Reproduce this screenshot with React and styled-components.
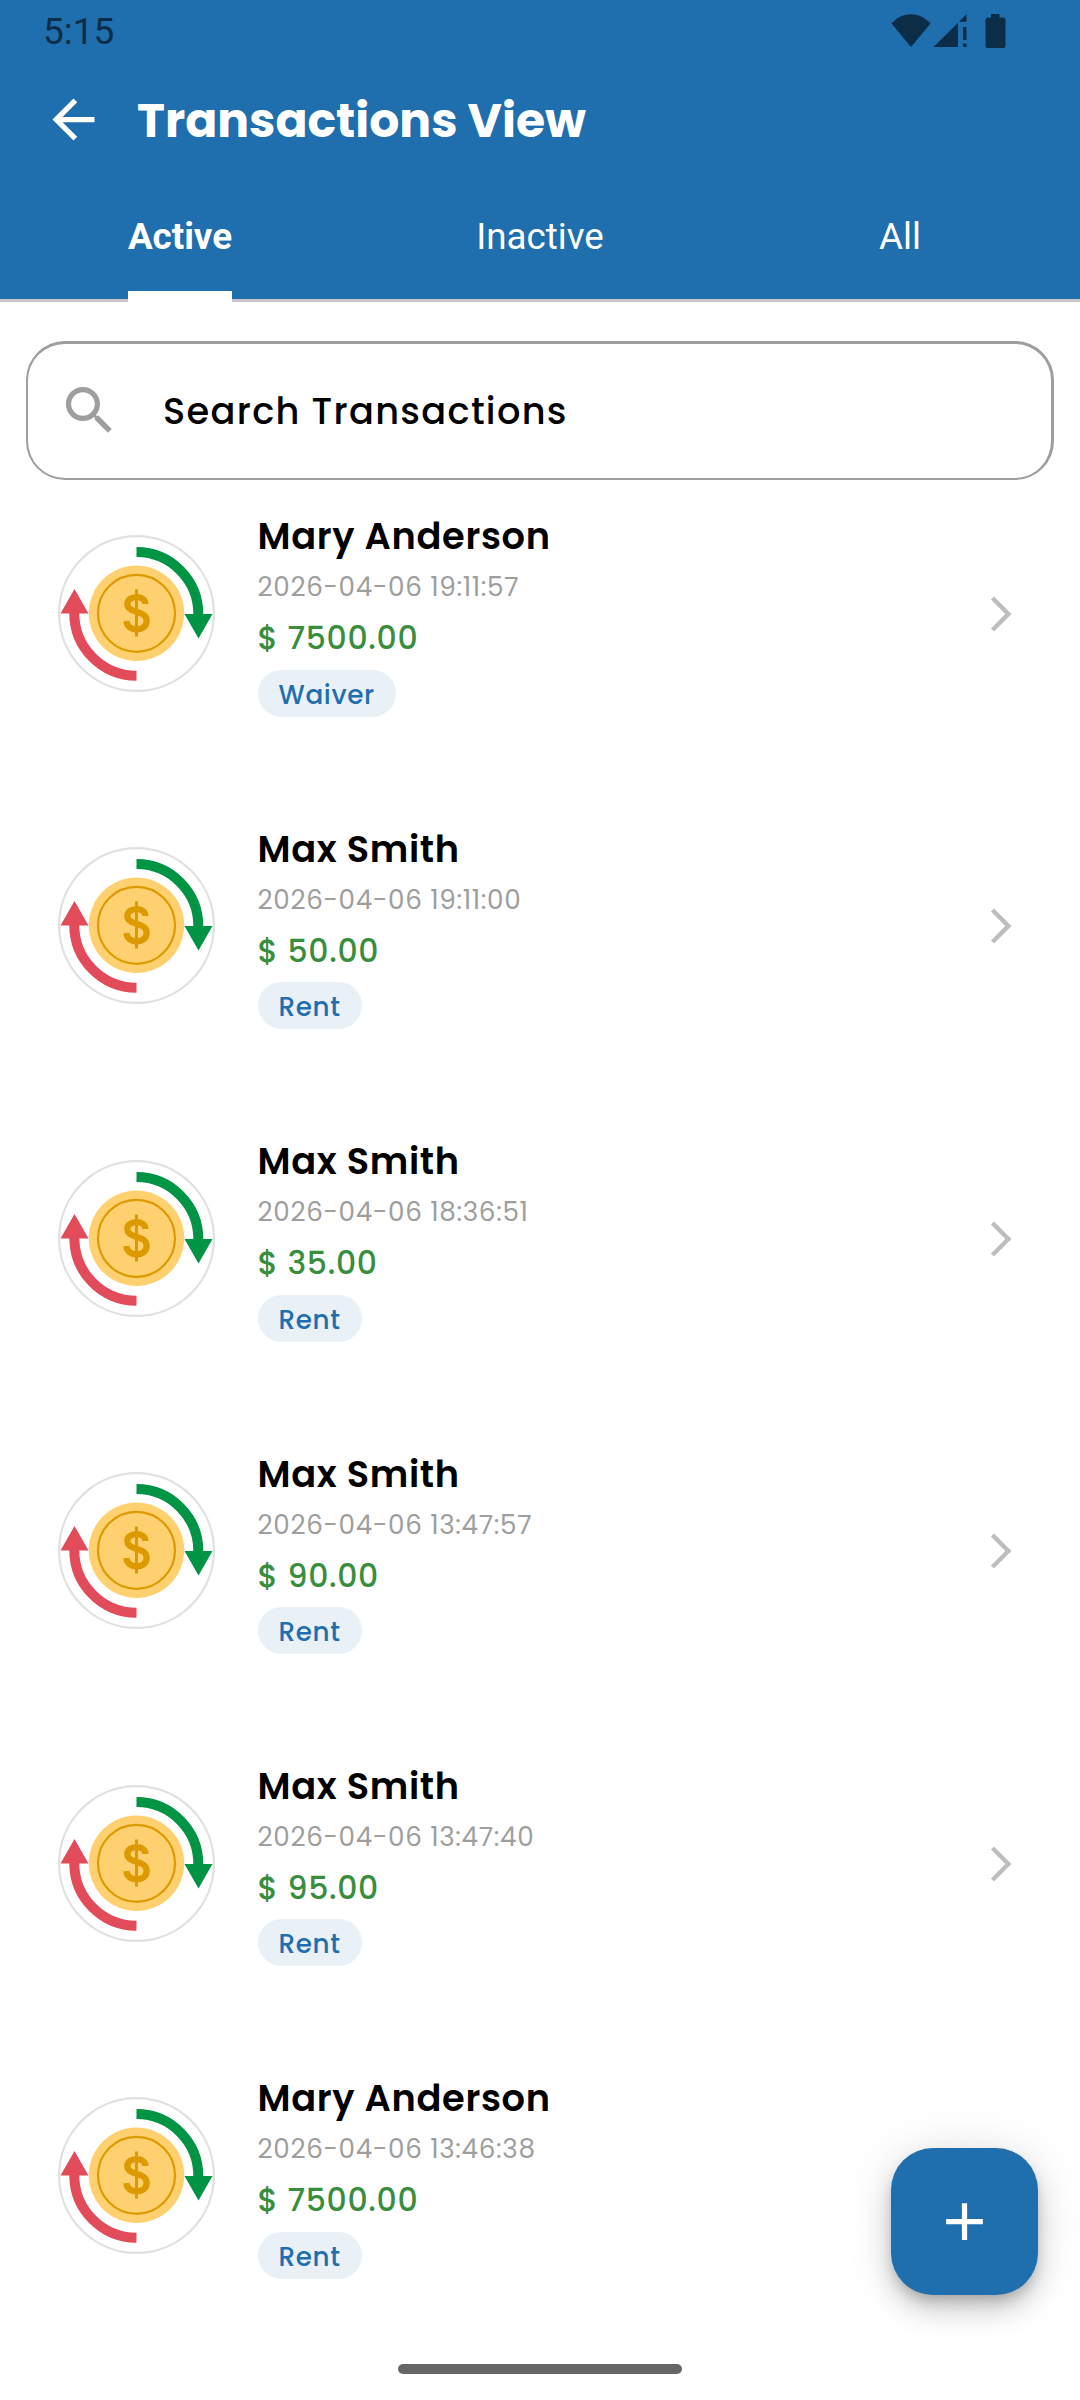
import React from "react";
import styled, { createGlobalStyle } from "styled-components";

const tabs = [
    { label: "Active", active: true },
    { label: "Inactive" },
    { label: "All" },
];

const transactions = [
    { name: "Mary Anderson", date: "2026-04-06 19:11:57", amount: "7500.00", type: "Waiver" },
    { name: "Max Smith", date: "2026-04-06 19:11:00", amount: "50.00", type: "Rent" },
    { name: "Max Smith", date: "2026-04-06 18:36:51", amount: "35.00", type: "Rent" },
    { name: "Max Smith", date: "2026-04-06 13:47:57", amount: "90.00", type: "Rent" },
    { name: "Max Smith", date: "2026-04-06 13:47:40", amount: "95.00", type: "Rent" },
    { name: "Mary Anderson", date: "2026-04-06 13:46:38", amount: "7500.00", type: "Rent" },
];

function StatusIcons() {
    return (
        <svg width="116" height="36" viewBox="0 0 116 36" fill="#0c2d48">
            <path d="M0.5 9.500C11.5-2.700 28-2.700 39.5 9.500L20 33Z" />
            <path d="M42.5 33L67 8.800V33Z" />
            <path d="M68 7.800L75.500 0.300V7.800Z" />
            <rect x="72" y="13" width="3.5" height="13" />
            <rect x="72" y="29.5" width="3.5" height="3.5" />
            <path d="M100 0h8.500v3.500h3.500q2.500 0 2.500 2.500v25.500q0 2.500-2.500 2.500h-15q-2.500 0-2.500-2.500v-25.500q0-2.500 2.500-2.500h3z" />
        </svg>
    );
}

function BackIcon() {
    return (
        <svg width="63" height="63" viewBox="0 0 24 24" fill="#fff">
            <path d="M20 11H7.83l5.59-5.59L12 4l-8 8 8 8 1.41-1.41L7.83 13H20v-2z" />
        </svg>
    );
}

function SearchIcon() {
    return (
        <svg width="63" height="63" viewBox="0 0 24 24" fill="#9e9e9e">
            <path d="M15.5 14h-.79l-.28-.27C15.41 12.59 16 11.11 16 9.5 16 5.91 13.09 3 9.5 3S3 5.91 3 9.5 5.91 16 9.5 16c1.61 0 3.09-.59 4.23-1.57l.27.28v.79l5 4.99L20.49 19l-4.99-5zm-6 0C7.01 14 5 11.99 5 9.5S7.01 5 9.5 5 14 7.01 14 9.5 11.99 14 9.5 14z" />
        </svg>
    );
}

function CoinIcon() {
    return (
        <svg width="157" height="157" viewBox="0 0 157 157">
            <circle cx="78.500" cy="78.500" r="77.400" fill="#fff" stroke="#e0e0e0" strokeWidth="2.200" />
            <circle cx="78.500" cy="78.300" r="47.700" fill="#ffd070" />
            <circle cx="78.500" cy="78.300" r="38.500" fill="none" stroke="#dd9a00" strokeWidth="2.200" />
            <path d="M78.500 17A62 62 0 0 1 140.300 79.500" fill="none" stroke="#019444" strokeWidth="10" />
            <path d="M126.500 79H154.500L140.500 103.500Z" fill="#019444" />
            <path d="M78.500 140.800A62.500 62.500 0 0 1 16.300 78" fill="none" stroke="#e14b5a" strokeWidth="10" />
            <path d="M2.500 78.500H30.500L16.500 54Z" fill="#e14b5a" />
            <path
                d="M87.3 69C87.300 64.500 84 62.200 78.700 62.200C73 62.200 69.300 65 69.300 69.200C69.300 73.500 73 75.300 79 77C85 78.700 88.600 80.500 88.600 86C88.600 91 84.500 94.300 78.800 94.300C72.500 94.300 68.800 91 68.500 86"
                fill="none"
                stroke="#dd9a00"
                strokeWidth="6.300"
            />
            <path d="M78.500 54.500V101.500" stroke="#dd9a00" strokeWidth="3" />
        </svg>
    );
}

function ChevronIcon() {
    return (
        <svg width="42" height="42" viewBox="0 0 24 24" fill="#bdbdbd">
            <path d="M6.23 20.23L8 22l10-10L8 2 6.23 3.77 14.46 12z" />
        </svg>
    );
}

function PlusIcon() {
    return (
        <svg width="63" height="63" viewBox="0 0 24 24" fill="#fff">
            <path d="M19 13h-6v6h-2v-6H5v-2h6V5h2v6h6v2z" />
        </svg>
    );
}

function App() {
    return (
        <>
            <GlobalStyle />
            <Screen>
                <Header>
                    <StatusBar>
                        <Clock>5:15</Clock>
                        <StatusIcons />
                    </StatusBar>
                    <TitleBar>
                        <BackIcon />
                        <Title>Transactions View</Title>
                    </TitleBar>
                    <Tabs>
                        {tabs.map((tab) => (
                            <TabItem key={tab.label}>
                                <Tab $active={tab.active}>{tab.label}</Tab>
                            </TabItem>
                        ))}
                    </Tabs>
                </Header>
                <SearchBox>
                    <SearchIcon />
                    <SearchText>Search Transactions</SearchText>
                </SearchBox>
                <List>
                    {transactions.map((item) => (
                        <Row key={item.date}>
                            <Avatar>
                                <CoinIcon />
                            </Avatar>
                            <Details>
                                <Name>{item.name}</Name>
                                <DateText>{item.date}</DateText>
                                <Amount>$ {item.amount}</Amount>
                                <Badge>{item.type}</Badge>
                            </Details>
                            <Arrow>
                                <ChevronIcon />
                            </Arrow>
                        </Row>
                    ))}
                </List>
                <AddButton aria-label="Add transaction">
                    <PlusIcon />
                </AddButton>
                <HomeBar />
            </Screen>
        </>
    );
}

export default App;

const GlobalStyle = createGlobalStyle`
    * {
        box-sizing: border-box;
    }
    body {
        margin: 0;
        background-color: #fff;
        font-family: Poppins, Inter, sans-serif;
    }
    svg {
        display: block;
        flex-shrink: 0;
    }
`;
const Screen = styled.div`
    position: relative;
    width: 1080px;
    height: 2400px;
    overflow: hidden;
    background-color: #fff;
`;
const Header = styled.header`
    height: 302px;
    background-color: #1f6eae;
    border-bottom: 3px solid #cac4d0;
`;
const StatusBar = styled.div`
    display: flex;
    justify-content: space-between;
    height: 63px;
    padding: 14px 73px 0 43px;
`;
const Clock = styled.span`
    font-family: Roboto, sans-serif;
    font-size: 37px;
    line-height: 36px;
    color: #0c2d48;
`;
const TitleBar = styled.div`
    display: flex;
    align-items: center;
    gap: 32px;
    height: 113px;
    padding: 0 42px;
`;
const Title = styled.h1`
    margin: 2px 0 0;
    font-size: 47.25px;
    font-weight: 700;
    line-height: 62px;
    white-space: nowrap;
    color: #fff;
`;
const Tabs = styled.nav`
    display: grid;
    grid-template-columns: repeat(3, 1fr);
    height: 126px;
`;
const TabItem = styled.div`
    display: flex;
    justify-content: center;
`;
const Tab = styled.div`
    height: 126px;
    padding-top: 39px;
    border-bottom: 11px solid ${(props) => (props.$active ? "#fff" : "transparent")};
    font-family: Roboto, sans-serif;
    font-size: 36.75px;
    font-weight: ${(props) => (props.$active ? 700 : 400)};
    line-height: 44px;
    color: #fff;
`;
const SearchBox = styled.div`
    display: flex;
    align-items: center;
    gap: 42px;
    height: 139px;
    margin: 39px 26px 0;
    padding-left: 30px;
    border: 2px solid #9e9e9e;
    border-top-width: 3px;
    border-right-width: 3px;
    border-radius: 39px;

    svg {
        margin-bottom: 1px;
    }
`;
const SearchText = styled.span`
    font-size: 36.75px;
    font-weight: 500;
    line-height: 54px;
    letter-spacing: 1.31px;
    color: #000;
`;
const List = styled.div`
    padding-top: 28px;
`;
const Row = styled.div`
    display: flex;
    height: 312.375px;
    padding: 0 58px;
`;
const Avatar = styled.div`
    margin-top: 27px;
`;
const Details = styled.div`
    display: flex;
    flex-direction: column;
    align-items: flex-start;
    flex: 1;
    margin-left: 42.5px;
    padding-top: 0.4px;
    white-space: nowrap;
`;
const Name = styled.div`
    font-size: 36.75px;
    font-weight: 600;
    line-height: 56px;
    letter-spacing: 0.66px;
    color: #000;
`;
const DateText = styled.div`
    font-size: 26.25px;
    font-weight: 400;
    line-height: 46px;
    letter-spacing: 0.66px;
    color: #9e9e9e;
`;
const Amount = styled.div`
    font-size: 31.5px;
    font-weight: 500;
    line-height: 56px;
    letter-spacing: 0.66px;
    color: #388e3c;
`;
const Badge = styled.div`
    height: 47px;
    margin-top: 3.6px;
    padding: 0 21px;
    border-radius: 24px;
    background-color: #e9f0f6;
    font-size: 26.25px;
    font-weight: 500;
    line-height: 50px;
    letter-spacing: 0.66px;
    color: #1f6eae;
`;
const Arrow = styled.div`
    margin-top: 85px;
`;
const AddButton = styled.button`
    position: absolute;
    right: 42px;
    bottom: 105px;
    display: flex;
    align-items: center;
    justify-content: center;
    width: 147px;
    height: 147px;
    padding: 0;
    border: none;
    border-radius: 42px;
    background-color: #1f6eae;
    box-shadow: 0 8px 13px -3px rgba(0, 0, 0, 0.2), 0 16px 26px rgba(0, 0, 0, 0.14),
        0 3px 47px rgba(0, 0, 0, 0.12);
`;
const HomeBar = styled.div`
    position: absolute;
    left: 398px;
    bottom: 26px;
    width: 284px;
    height: 10px;
    border-radius: 5px;
    background-color: #666;
`;
